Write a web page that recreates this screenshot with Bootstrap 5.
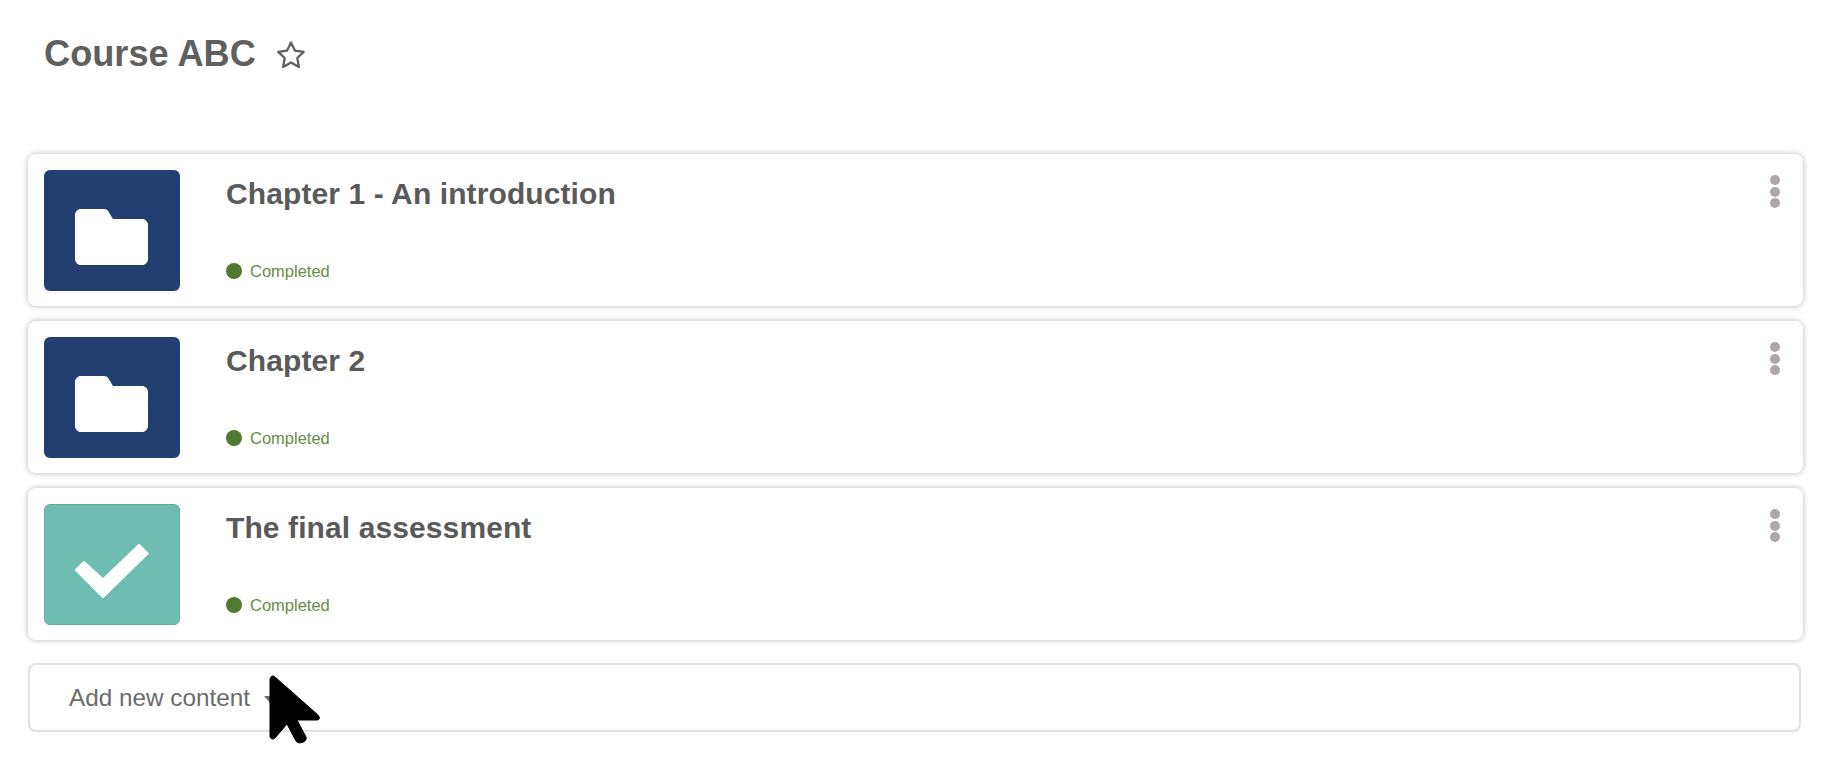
<!DOCTYPE html>
<html lang="en">
<head>
<meta charset="utf-8">
<title>Course ABC</title>
<link rel="stylesheet" href="https://cdn.jsdelivr.net/npm/bootstrap@5.3.0/dist/css/bootstrap.min.css">
<style>
body{font-family:"Liberation Sans",Arial,sans-serif;background:#fff;color:#5b5b5b;}
.page-wrap{padding:32px 34px 0 28px;}
.course-head{height:122px;padding:0 0 0 16px;align-items:flex-start;}
.course-title{font-size:36.2px;font-weight:700;line-height:44px;color:#5f5f5f;margin:0;}
.star-ico{width:32px;height:32px;margin-left:19px;margin-top:7px;}
.item-stack{gap:15px;}
.item-card{height:152px;border:0;border-radius:8px;box-shadow:0 0 6px rgba(0,0,0,.28);padding:16px 18px 15px 16px;}
.item-thumb{width:136px;height:121px;border-radius:6px;flex:none;}
.thumb-folder{background:#233e70;}
.thumb-check{background:#6fbcb0;border:1px solid #62ab9f;}
.thumb-folder svg{margin-top:12px;margin-right:2px;}
.thumb-check svg{margin-top:13px;}
.item-body{margin-left:46px;padding-top:4px;}
.item-title{font-size:30px;font-weight:700;line-height:40px;color:#5a5a5a;margin:0;letter-spacing:.1px;}
.state-row{font-size:16.5px;line-height:20px;color:#6a8a47;gap:8px;margin-bottom:10px;}
.state-dot{width:16px;height:16px;border-radius:50%;background:#4f7a2f;flex:none;}
.dots-col{gap:1.5px;margin-top:5px;margin-right:5px;}
.dots-col i{display:block;width:10px;height:10px;border-radius:50%;background:#aea6a8;}
.add-wrap{margin-top:23px;margin-right:2px;}
.add-btn{width:100%;height:69px;border:2px solid #e0e0e0;border-radius:8px;background:#fff;color:#6c6c6c;font-size:24.3px;text-align:left;padding:2px 0 0 39px;display:flex;align-items:center;gap:14px;}
.add-btn:hover,.add-btn:active{background:#fff;color:#6c6c6c;border-color:#e0e0e0;}
.caret-mark{width:0;height:0;border-left:6px solid transparent;border-right:6px solid transparent;border-top:7px solid #6c6c6c;margin-top:2px;}
.cursor-ico{position:absolute;left:266px;top:672px;width:60px;height:78px;}
</style>
</head>
<body>
<div class="page-wrap position-relative">
  <header class="course-head d-flex">
    <h1 class="course-title">Course ABC</h1>
    <svg class="star-ico" viewBox="0 0 32 32" fill="none" stroke="#5f5f5f" stroke-width="2.3" stroke-linejoin="round"><path d="M16 3.5l3.9 8.1 8.8 1.2-6.4 6.2 1.6 8.900-7.900-4.300-7.900 4.300 1.600-8.900-6.400-6.200 8.800-1.200z"/></svg>
  </header>

  <main class="item-stack d-flex flex-column">
    <section class="card item-card flex-row">
      <div class="item-thumb thumb-folder d-flex align-items-center justify-content-center">
        <svg width="73" height="56" viewBox="0 0 73 56"><path d="M6 0h23c2 0 3.400.8 4.400 2.400L38 10h29c3.300 0 6 2.700 6 6v34c0 3.300-2.700 6-6 6H6c-3.300 0-6-2.700-6-6V6c0-3.300 2.700-6 6-6z" fill="#fff"/></svg>
      </div>
      <div class="item-body flex-grow-1 d-flex flex-column justify-content-between">
        <h2 class="item-title">Chapter 1 - An introduction</h2>
        <div class="state-row d-flex align-items-center"><span class="state-dot"></span>Completed</div>
      </div>
      <div class="dots-col d-flex flex-column"><i></i><i></i><i></i></div>
    </section>

    <section class="card item-card flex-row">
      <div class="item-thumb thumb-folder d-flex align-items-center justify-content-center">
        <svg width="73" height="56" viewBox="0 0 73 56"><path d="M6 0h23c2 0 3.400.8 4.400 2.400L38 10h29c3.300 0 6 2.700 6 6v34c0 3.300-2.700 6-6 6H6c-3.300 0-6-2.700-6-6V6c0-3.300 2.700-6 6-6z" fill="#fff"/></svg>
      </div>
      <div class="item-body flex-grow-1 d-flex flex-column justify-content-between">
        <h2 class="item-title">Chapter 2</h2>
        <div class="state-row d-flex align-items-center"><span class="state-dot"></span>Completed</div>
      </div>
      <div class="dots-col d-flex flex-column"><i></i><i></i><i></i></div>
    </section>

    <section class="card item-card flex-row">
      <div class="item-thumb thumb-check d-flex align-items-center justify-content-center">
        <svg width="74" height="54" viewBox="0 0 74 54"><path d="M1.500 26L9 18.500 28 36 64 1.500 72 9.500 28 52.500z" fill="#fff" stroke="#fff" stroke-width="3" stroke-linejoin="round"/></svg>
      </div>
      <div class="item-body flex-grow-1 d-flex flex-column justify-content-between">
        <h2 class="item-title">The final assessment</h2>
        <div class="state-row d-flex align-items-center"><span class="state-dot"></span>Completed</div>
      </div>
      <div class="dots-col d-flex flex-column"><i></i><i></i><i></i></div>
    </section>
  </main>

  <div class="add-wrap">
    <button type="button" class="btn add-btn">Add new content <span class="caret-mark"></span></button>
  </div>
</div>
<svg class="cursor-ico" viewBox="0 0 60 78"><path d="M4 8V64c0 3 3 4 5 2L21 52l9 17c2 4 12 1 10-4L31 48H51c3 0 3-3 1-5L9 5C7 3 4 4 4 8z" fill="#000" stroke="#000" stroke-width="1" stroke-linejoin="round"/></svg>
</body>
</html>
